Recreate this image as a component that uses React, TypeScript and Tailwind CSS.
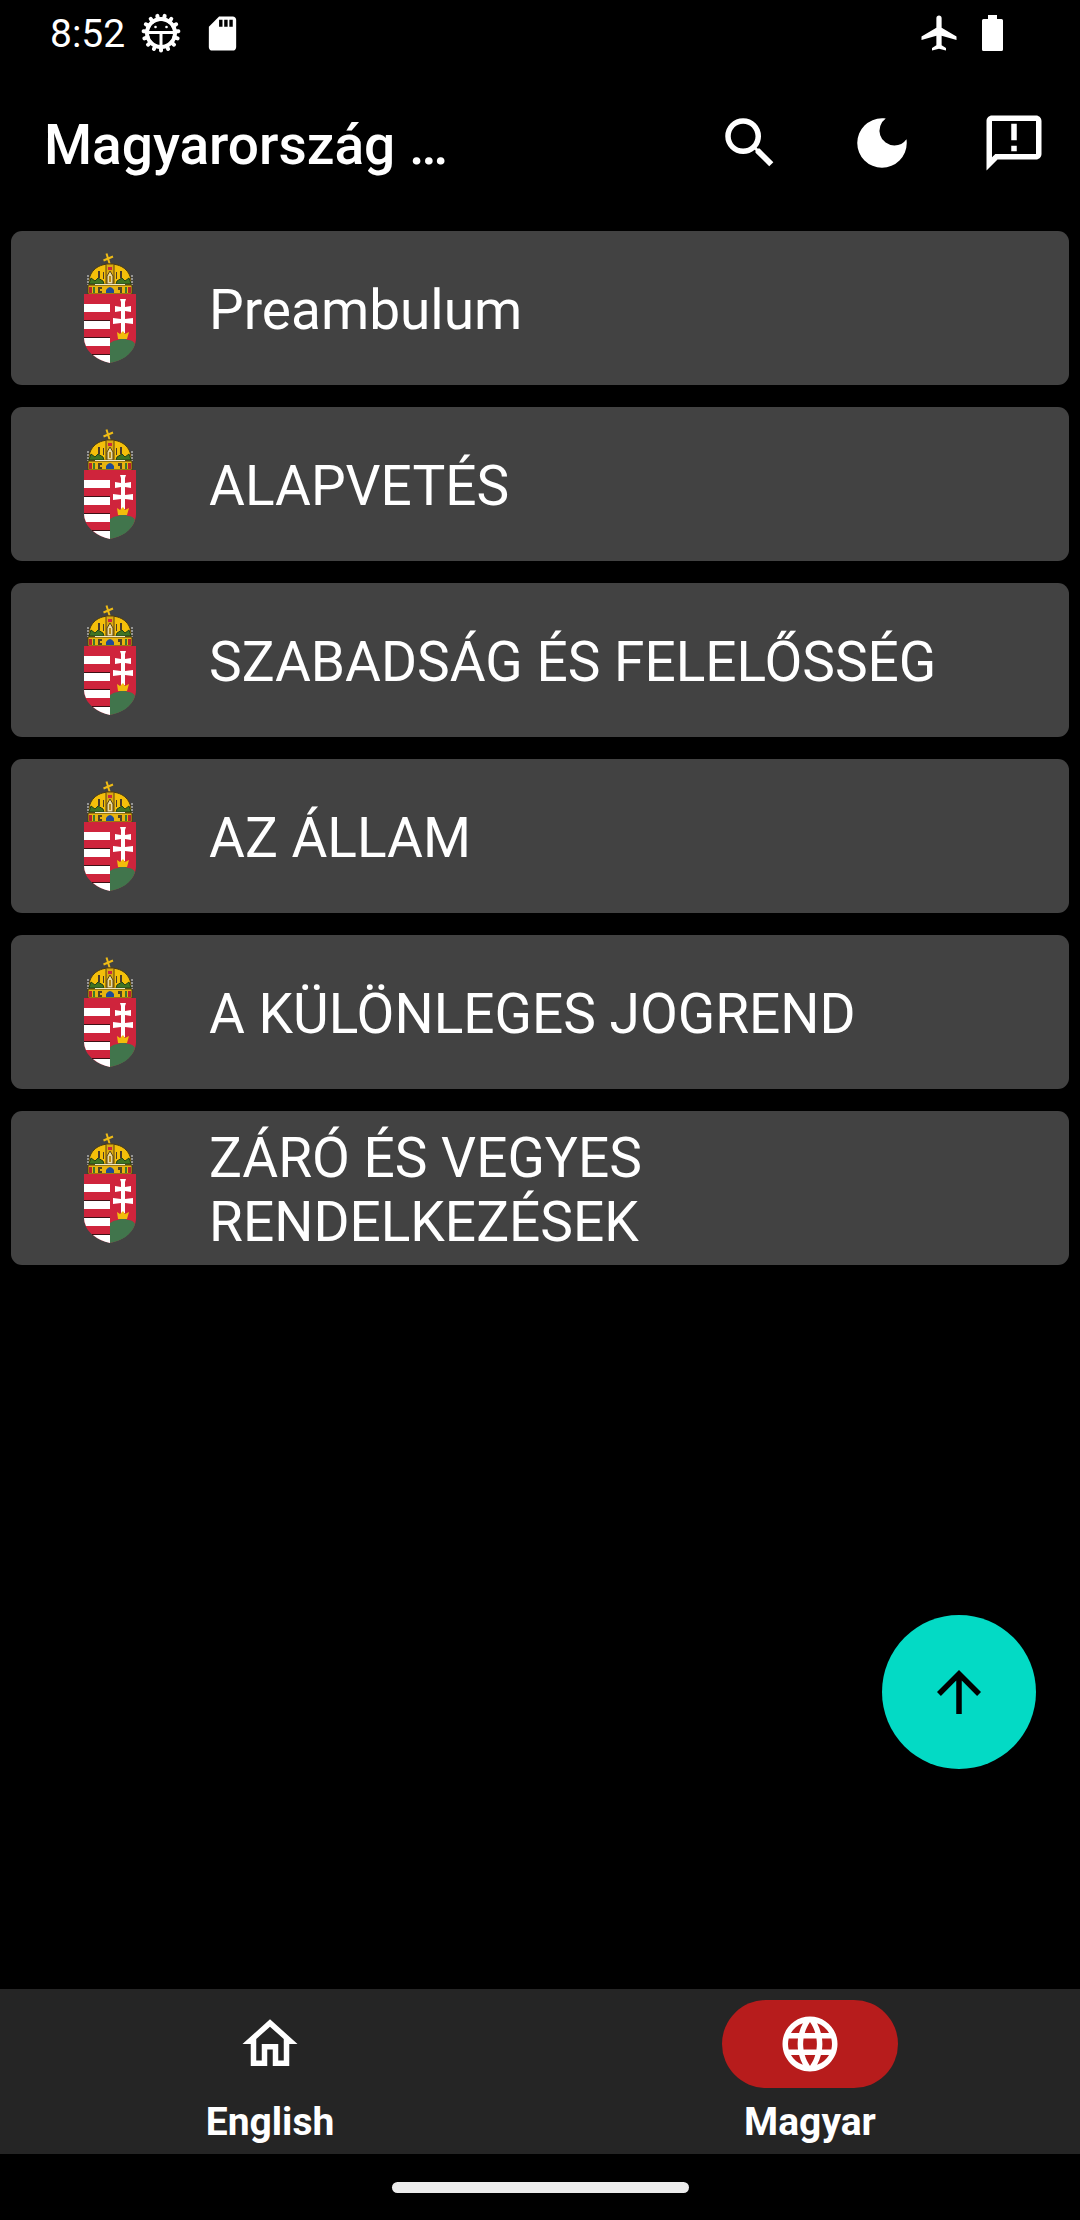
import { useState } from 'react';
import {
  MdAirplanemodeActive,
  MdArrowUpward,
  MdDarkMode,
  MdLanguage,
  MdOutlineHome,
  MdSdCard,
  MdSearch,
} from 'react-icons/md';

const fejezetek = [
  'Preambulum',
  'ALAPVETÉS',
  'SZABADSÁG ÉS FELELŐSSÉG',
  'AZ ÁLLAM',
  'A KÜLÖNLEGES JOGREND',
  'ZÁRÓ ÉS VEGYES RENDELKEZÉSEK',
];

const nyelvek = [
  { nev: 'English', Icon: MdOutlineHome },
  { nev: 'Magyar', Icon: MdLanguage },
];

const fogak = Array.from({ length: 15 }, (_, i) => 12 + i * 24);

function GearIcon() {
  return (
    <svg viewBox="0 0 40 40" className="size-10" fill="none" stroke="currentColor">
      <circle cx="20" cy="20" r="14" strokeWidth="4" />
      {fogak.map((fok) => (
        <path key={fok} d="M20 6V2.500" strokeWidth="4" strokeLinecap="round" transform={`rotate(${fok} 20 20)`} />
      ))}
      <path d="M7 19.500H33M20 19V34" strokeWidth="3" />
      <circle cx="14.500" cy="14" r="1.300" fill="currentColor" stroke="none" />
      <circle cx="25.500" cy="14" r="1.300" fill="currentColor" stroke="none" />
    </svg>
  );
}

function BatteryIcon() {
  return (
    <svg viewBox="0 0 21 36" className="h-9 w-[21px]" fill="currentColor">
      <path d="M6 0H15V4H19.500Q21 4 21 5.500V34.500Q21 36 19.500 36H1.500Q0 36 0 34.500V5.500Q0 4 1.500 4H6Z" />
    </svg>
  );
}

function FeedbackIcon() {
  return (
    <svg viewBox="0 0 24 24" className="size-[66px]" fill="currentColor">
      <path d="M20 2H4c-1.100 0-2 .9-2 2v18l4-4h14c1.100 0 2-.9 2-2V4c0-1.100-.9-2-2-2zm0 14H5.200L4 17.200V4h16v12zM11 5h2v6h-2zM11 13h2v2h-2z" />
    </svg>
  );
}

function Cimer() {
  return (
    <svg viewBox="0 0 52 110" className="h-[110px] w-[52px]" aria-hidden="true">
      {/* crown */}
      <path d="M26 12L22.500 0.500M19.500 7.500L29 3.500" stroke="#eebb16" strokeWidth="2" fill="none" />
      <path d="M5 32C4 20 12 11 26 11S48 20 47 32Z" fill="#f4bf0a" stroke="#4a3b12" strokeWidth="1" />
      <path d="M22 11H30V32H22Z" fill="#dca90f" stroke="#5c4510" strokeWidth="1" />
      <path d="M24 14H28V17H24Z" fill="#cd2a3e" />
      <path d="M26 18L29 23V31H23V23Z" fill="#e9d9a0" stroke="#5c4510" strokeWidth="1" />
      <path d="M25 23H27V29H25Z" fill="#b98a14" />
      <path d="M14 18H16V25H14ZM36 18H38V25H36ZM19 19H20V26H19ZM32 19H33V26H32Z" fill="#4a3b2a" />
      <path d="M5 31L7 25L11 28L14 25L19 28L20 31ZM47 31L45 25L41 28L38 25L33 28L32 31Z" fill="#3f7424" stroke="#23401a" strokeWidth="1" />
      <path d="M4 22V32M48 22V32" stroke="#e8e8e8" strokeWidth="1" strokeDasharray="2 1" />
      <path d="M4 32H48V41H4Z" fill="#e9b40f" stroke="#4a3b12" strokeWidth="1" />
      <path d="M11 31.500H41" stroke="#efe6c4" strokeWidth="1" />
      <path d="M5 34H8V40H5ZM44 34H47V40H44Z" fill="#b8242f" />
      <path d="M9 34H11V40H9ZM41 34H43V40H41Z" fill="#3c7a2c" />
      <path d="M14 34H18V36H16V38H18V40H14ZM34 34H38V40H36V37H34Z" fill="#4f4428" />
      <path d="M22 40V37Q26 31 30 37V40Z" fill="#1f4a96" />
      {/* shield */}
      <path d="M0 41H52V85C52 98 40 107 26 110C12 107 0 98 0 85Z" fill="#cf243c" />
      <path d="M0 51H26V59H0ZM0 68H26V76H0ZM0 85H26V93H2Q0 89 0 85ZM9 102H26V110Q16 108 9 102Z" fill="#fff" />
      <path d="M0 67.500H26M0 84.500H26M8 101.500H26" stroke="#3d1015" strokeWidth="1" />
      <path d="M26 90Q30 87 34 87Q39 84 44 87Q49 87 51 91C48 102 37 108 26 110Z" fill="#41754c" />
      <path
        d="M36 46H42L41 49V54L47 53V59L41 58V66L49 65V71L41 70V80H37V70L29 71V65L37 66V58L31 59V53L37 54V49Z"
        fill="#fff"
      />
      <path d="M33 79L36 81L39 78L41 81L45 79L43 86H34Z" fill="#f2bd0c" />
    </svg>
  );
}

function StatusBar() {
  return (
    <div className="flex h-[66px] items-center px-[50px] text-[39px] leading-none">
      <span className="w-[91px] pt-0.5">8:52</span>
      <GearIcon />
      <MdSdCard className="ml-[21px] size-[41px]" />
      <div className="ml-auto mr-[27px] flex items-center gap-[22px]">
        <MdAirplanemodeActive className="size-[42px]" />
        <BatteryIcon />
      </div>
    </div>
  );
}

function ActionButton({ label, children }: { label: string; children: React.ReactNode }) {
  return (
    <button aria-label={label} className="flex h-full w-[132px] items-center justify-center text-[66px]">
      {children}
    </button>
  );
}

function App() {
  const [nyelv, setNyelv] = useState('Magyar');

  return (
    <div className="flex min-h-screen flex-col bg-black font-[Roboto,sans-serif] text-white">
      <StatusBar />

      <header className="flex h-[154px] items-center pl-11">
        <h1 className="flex-1 pt-1 text-[55px] font-medium">Magyarország …</h1>
        <ActionButton label="Keresés">
          <MdSearch />
        </ActionButton>
        <ActionButton label="Sötét mód">
          <MdDarkMode />
        </ActionButton>
        <ActionButton label="Visszajelzés">
          <FeedbackIcon />
        </ActionButton>
      </header>

      <main className="relative flex-1 p-[11px]">
        <ul className="flex flex-col gap-[22px]">
          {fejezetek.map((fejezet) => (
            <li key={fejezet}>
              <button className="flex min-h-[154px] w-full items-center gap-[73px] rounded-[11px] bg-[#424242] pl-[73px] pr-11 text-left text-[55px] leading-[64px]">
                <Cimer />
                <span className="flex-1 pt-1">{fejezet}</span>
              </button>
            </li>
          ))}
        </ul>

        <button
          aria-label="Ugrás a tetejére"
          className="absolute bottom-[220px] right-11 flex size-[154px] items-center justify-center rounded-full bg-[#03dac5] text-[66px] text-black">
          <MdArrowUpward />
        </button>
      </main>

      <nav className="flex h-[165px] bg-[#252525]">
        {nyelvek.map(({ nev, Icon }) => (
          <button key={nev} onClick={() => setNyelv(nev)} className="flex flex-1 flex-col items-center pt-[11px]">
            <span
              className={`flex h-[88px] w-44 items-center justify-center rounded-full text-[66px] ${
                nyelv === nev ? 'bg-[#b71c1c]' : ''
              }`}>
              <Icon />
            </span>
            <span className="mt-3 text-[39px] font-bold leading-[44px]">{nev}</span>
          </button>
        ))}
      </nav>

      <div className="flex h-[66px] items-center justify-center">
        <div className="h-[11px] w-[297px] rounded-full bg-[#ececec]" />
      </div>
    </div>
  );
}

export default App;
